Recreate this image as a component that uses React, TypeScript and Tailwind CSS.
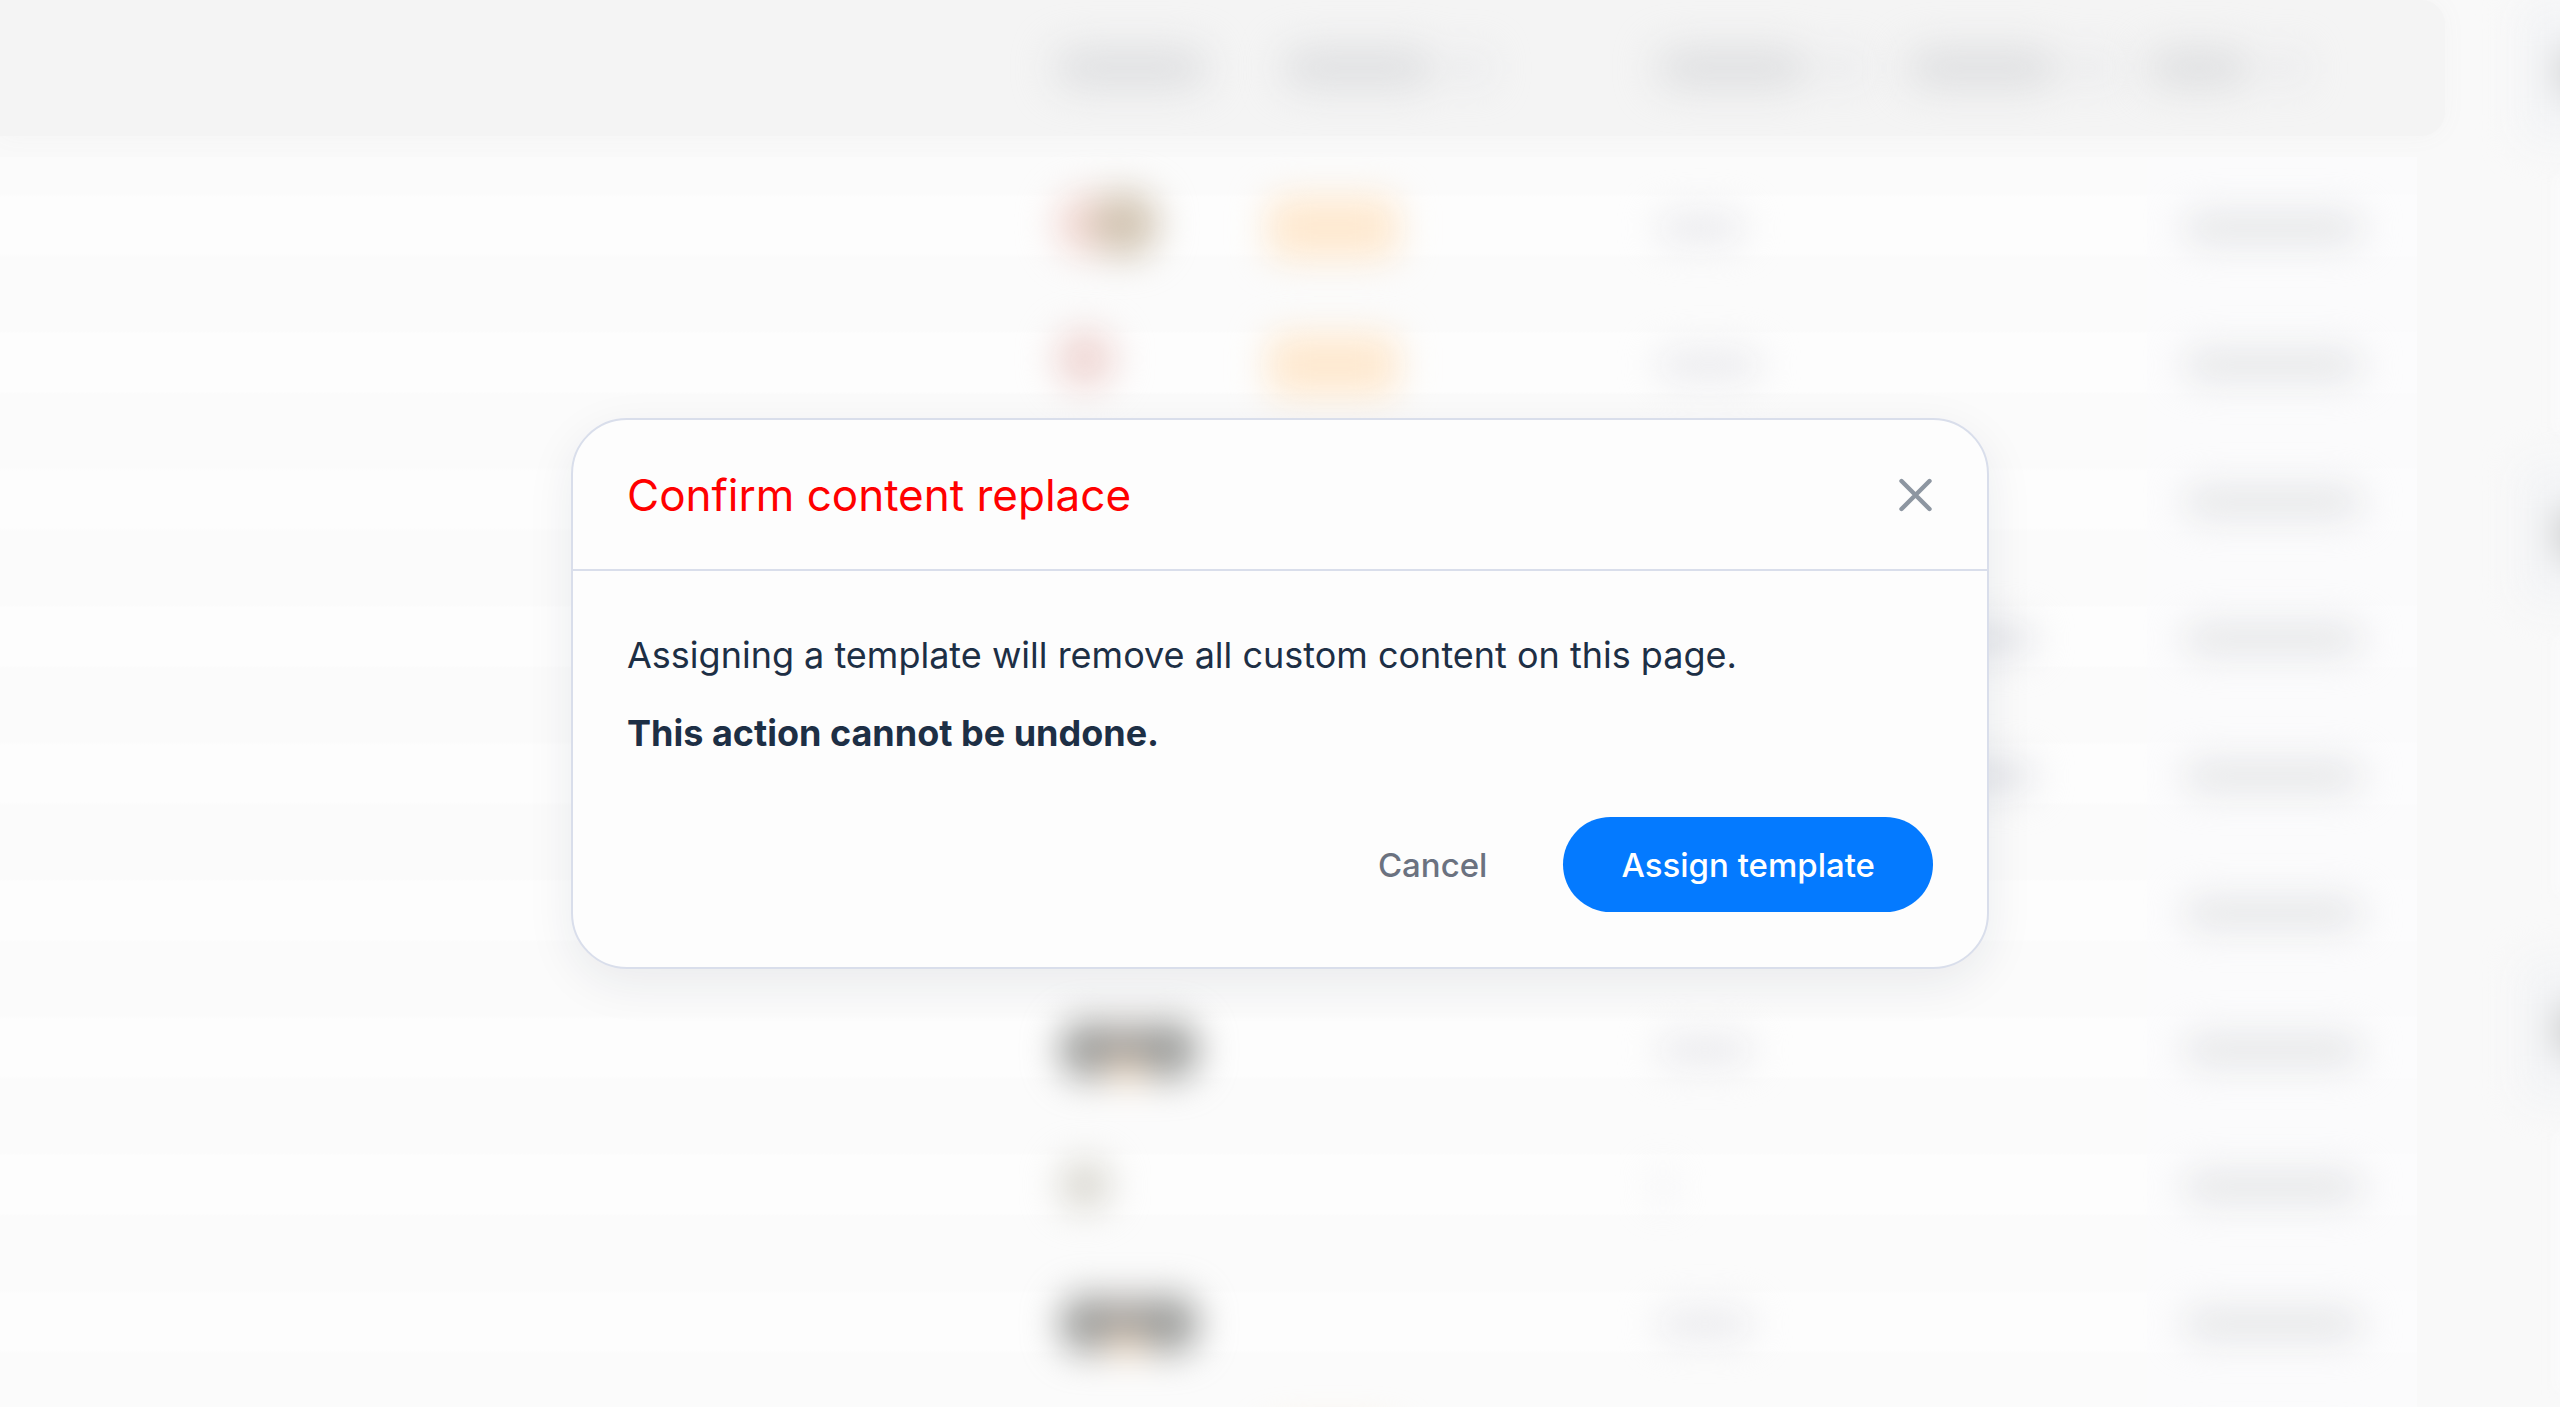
import { useState } from "react";

type Row = {
  avatars?: "pair" | "rose" | "trio" | "sand";
  pill?: boolean;
  date?: string;
  template?: boolean;
};

const rows: Row[] = [
  { avatars: "pair", pill: true, date: "w-22" },
  { avatars: "rose", pill: true, date: "w-26" },
  {},
  { template: true },
  { template: true },
  {},
  { avatars: "trio", date: "w-24" },
  { avatars: "sand", date: "w-3" },
  { avatars: "trio", date: "w-24" },
  { pill: true },
];

const columns = "grid grid-cols-[1fr_212px_390px_250px_240px_270px] items-center";

function Avatars({ kind }: { kind?: Row["avatars"] }) {
  if (kind === "pair") {
    return (
      <div className="flex items-center pb-1 -space-x-7 blur-[18px]">
        <span className="size-16 rounded-full bg-[#f3d9d4]" />
        <span className="size-17 rounded-full bg-[#d2c5b3]" />
      </div>
    );
  }
  if (kind === "rose") {
    return (
      <div className="flex pb-2 blur-[18px]">
        <span className="size-15 rounded-full bg-[#efd6d3]" />
      </div>
    );
  }
  if (kind === "trio") {
    return (
      <div className="flex items-center pt-1 pl-1 -space-x-5 blur-[18px]">
        <span className="size-15 rounded-full bg-[#9c9d9b]" />
        <span className="size-15 rounded-full bg-linear-to-b from-[#a8a4a0] from-65% to-[#ffd9ae] to-85%" />
        <span className="size-15 rounded-full bg-[#9c9d9b]" />
      </div>
    );
  }
  if (kind === "sand") {
    return (
      <div className="flex pl-1 blur-[18px]">
        <span className="size-13 rounded-full bg-[#dad8d1]" />
      </div>
    );
  }
  return <div />;
}

function HeaderCell({ width, sortable = true }: { width: string; sortable?: boolean }) {
  return (
    <div className="flex items-center gap-6 blur-[20px]">
      <span className={`h-9 rounded-full bg-[#dcdddf] ${width}`} />
      {sortable && <span className="size-7 rounded-full bg-[#e2e3e7]" />}
    </div>
  );
}

function TableRow({ row }: { row: Row }) {
  return (
    <div
      className={`h-[137px] shrink-0 bg-[linear-gradient(#fbfbfb_27%,#fdfdfd_29%,#fdfdfd_71%,#fbfbfb_73%)] ${columns}`}
    >
      <div />
      <Avatars kind={row.avatars} />
      <div className="pt-1">
        {row.pill && <div className="h-16 w-33 rounded-2xl bg-[#fee9d0] blur-[18px]" />}
      </div>
      <div className="pt-1">
        {row.date && <div className={`h-8 rounded-full bg-[#ebebee] blur-[18px] ${row.date}`} />}
      </div>
      <div className="pt-1">
        {row.template && <div className="h-9 w-32 rounded-full bg-[#e5e6ea] blur-[18px]" />}
      </div>
      <div className="flex h-full items-center bg-[#fbfcfd]/60 pt-1 pl-9">
        <div className="h-8 w-45 rounded-full bg-[#e5e6e8] blur-[18px]" />
      </div>
    </div>
  );
}

function SideGroup({ height, bar }: { height: string; bar: string }) {
  return (
    <div className={`shrink-0 ${height}`}>
      <div className="flex h-36 w-40 items-center rounded-2xl bg-[#f3f4f6] pl-9 blur-[18px]">
        <span className={`h-13 w-32 rounded-full ${bar}`} />
      </div>
      <div className="mt-8 ml-10 h-64 w-40 bg-[#fcfcfd] blur-[8px]" />
    </div>
  );
}

function PagesTable() {
  return (
    <div className="flex h-full bg-[#f9f9f9]" aria-hidden="true">
      <div className="min-w-0 flex-1">
        <div
          className={`h-[136px] rounded-r-3xl bg-[#f4f4f4] pr-7 shadow-[0_0_24px_#f4f4f4] ${columns}`}
        >
          <div />
          <HeaderCell width="w-38" sortable={false} />
          <div className="pl-4">
            <HeaderCell width="w-38" />
          </div>
          <HeaderCell width="w-38" />
          <HeaderCell width="w-38" />
          <HeaderCell width="w-26" />
        </div>
        <div className="mr-7 pt-[21px]">
          {rows.map((row, i) => (
            <TableRow key={i} row={row} />
          ))}
        </div>
      </div>
      <div className="flex w-[115px] flex-col overflow-hidden pl-[74px]">
        <SideGroup height="h-[462px]" bar="bg-[#d2d3d4]" />
        <SideGroup height="h-[496px]" bar="bg-[#c8c9c9]" />
        <SideGroup height="h-[496px]" bar="bg-[#c8c9c9]" />
      </div>
    </div>
  );
}

function CloseIcon() {
  return (
    <svg width="34" height="34" viewBox="0 0 34 34" fill="none" aria-hidden="true">
      <path
        d="M2.5 3 L30.5 31 M30.5 3 L2.5 31"
        stroke="#8d96a1"
        strokeWidth="4.4"
        strokeLinecap="round"
      />
    </svg>
  );
}

export default function App() {
  const [open, setOpen] = useState(true);
  const close = () => setOpen(false);

  return (
    <main className="relative h-screen overflow-hidden font-['Inter',sans-serif]">
      <PagesTable />

      {/* MODAL */}
      {open && (
        <div className="absolute inset-0 flex items-center justify-center px-6 pb-5">
          <div
            role="dialog"
            aria-modal="true"
            aria-labelledby="confirm-title"
            className="w-full max-w-[1418px] rounded-[56px] border-2 border-[#d9deeb] bg-[#fdfdfd] shadow-[0_14px_48px_rgba(30,41,70,0.08)]"
          >
            <div className="flex h-[151px] items-center justify-between border-b-2 border-[#d9deeb] px-[54px]">
              <h2 id="confirm-title" className="text-[44px] leading-[54px] text-[#ff0000]">
                Confirm content replace
              </h2>
              <button type="button" aria-label="Close" onClick={close}>
                <CloseIcon />
              </button>
            </div>

            <div className="px-[54px] pt-[57px] pb-[55px] text-[36px] leading-[54px] text-[#1d2f45]">
              <p>Assigning a template will remove all custom content on this page.</p>
              <p className="mt-6 font-bold">This action cannot be undone.</p>

              <div className="mt-[57px] flex items-center justify-end gap-[18px] text-[33px] font-medium">
                <button
                  type="button"
                  onClick={close}
                  className="h-[95px] rounded-full px-[58px] text-[#6b7280]"
                >
                  Cancel
                </button>
                <button
                  type="button"
                  onClick={close}
                  className="h-[95px] rounded-full bg-[#047aff] px-[58px] text-white"
                >
                  Assign template
                </button>
              </div>
            </div>
          </div>
        </div>
      )}
    </main>
  );
}
